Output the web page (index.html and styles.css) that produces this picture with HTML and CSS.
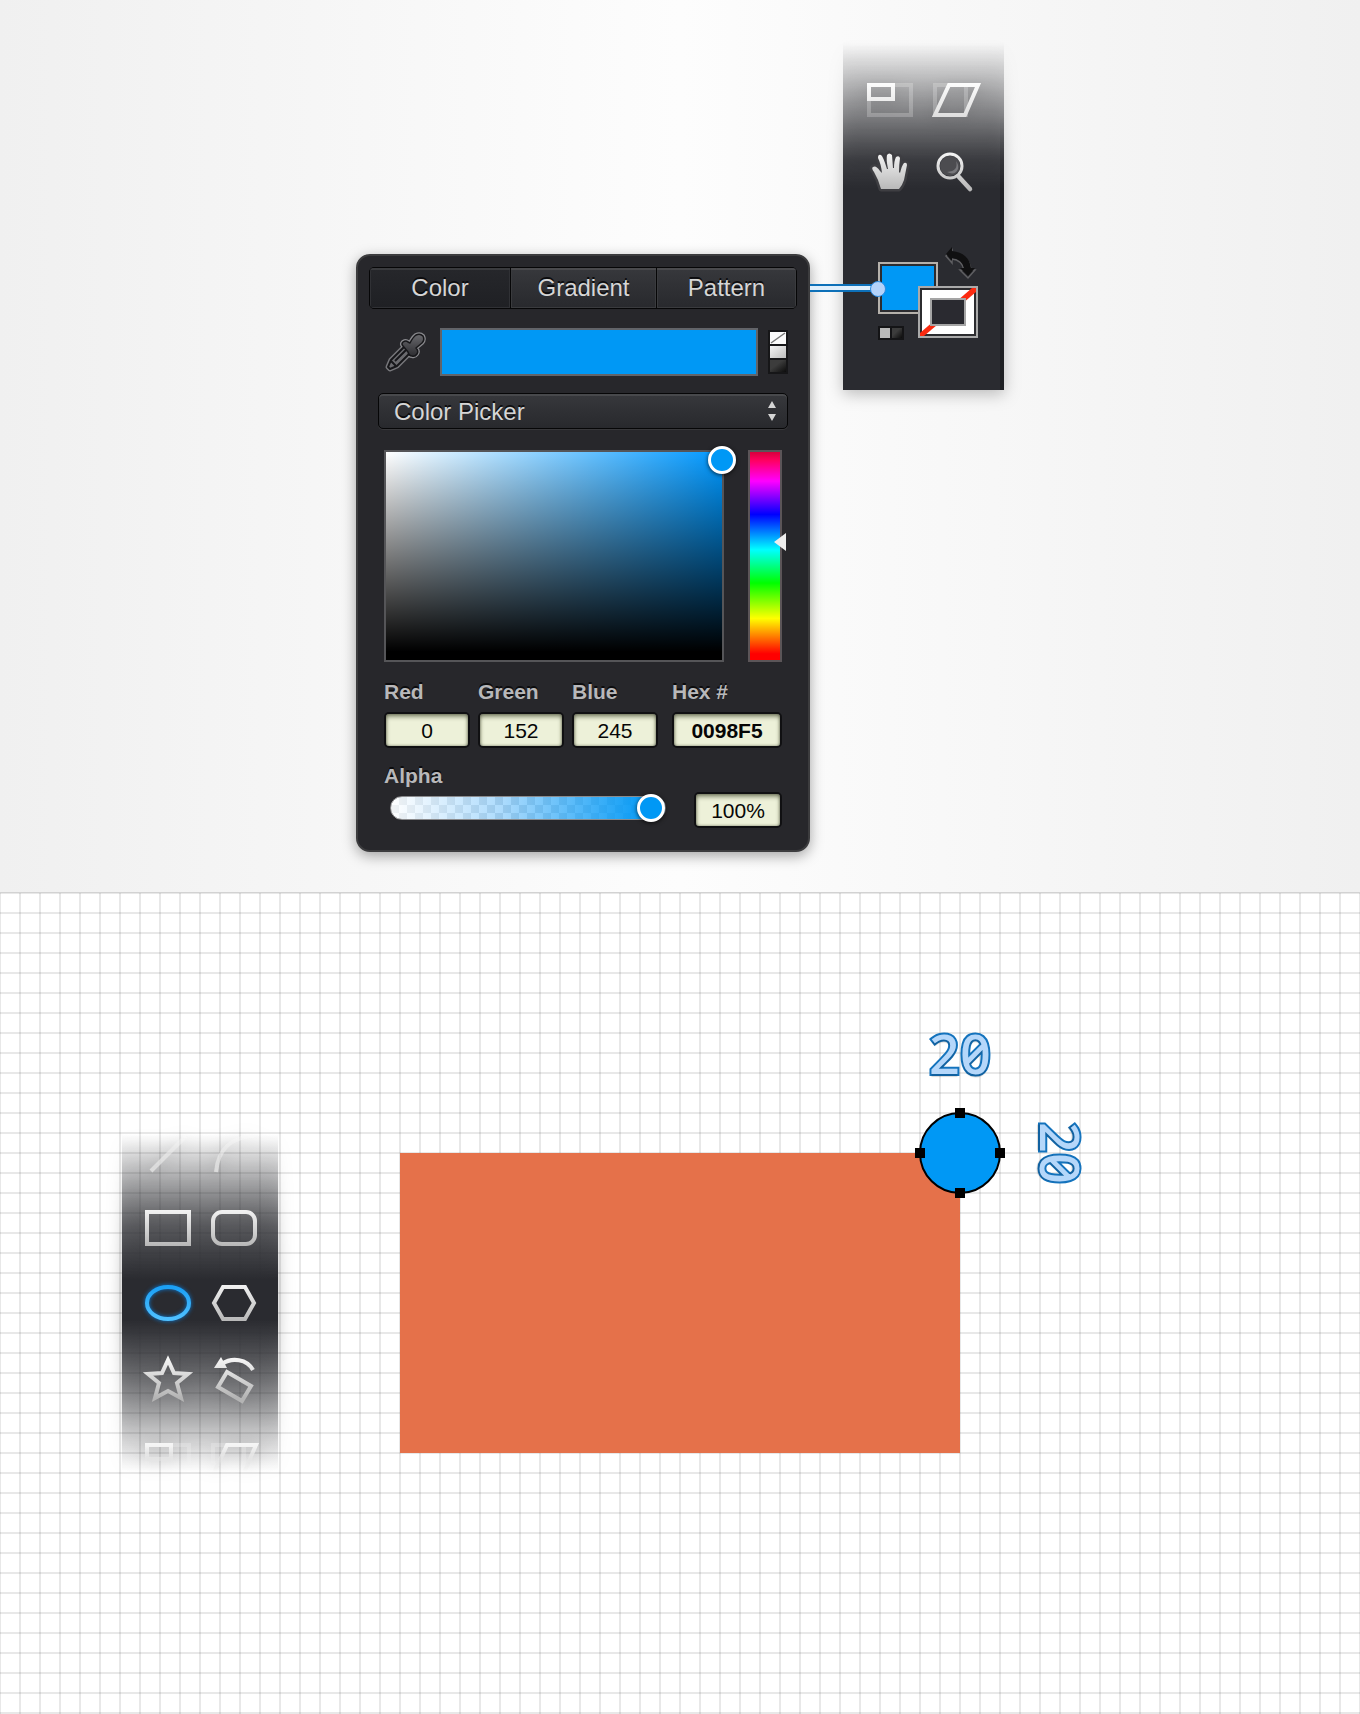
FILE: index.html
```html
<!DOCTYPE html>
<html lang="en">
<head>
<meta charset="utf-8">
<meta name="viewport" content="width=device-width, initial-scale=1">
<title>Color Picker</title>
<link rel="stylesheet" href="styles.css">
</head>
<body>
<svg class="defs" width="0" height="0" aria-hidden="true">
  <defs>
    <linearGradient id="metal" gradientUnits="userSpaceOnUse" x1="0" y1="-20" x2="0" y2="20">
      <stop offset="0" stop-color="#f6f6f6"/><stop offset="1" stop-color="#b4b4b4"/>
    </linearGradient>
    <linearGradient id="silver" gradientUnits="userSpaceOnUse" x1="0" y1="-20" x2="0" y2="20">
      <stop offset="0" stop-color="#ffffff"/><stop offset="1" stop-color="#dcdcdc"/>
    </linearGradient>
    <linearGradient id="glow" x1="0" y1="0" x2="0" y2="1">
      <stop offset="0" stop-color="#1ba0f5"/><stop offset="1" stop-color="#4fc0ff"/>
    </linearGradient>
    <linearGradient id="ink" x1="0" y1="0" x2="1" y2="1">
      <stop offset="0.4" stop-color="#3c3c3c"/><stop offset="1" stop-color="#0c0c0c"/>
    </linearGradient>
    <linearGradient id="paper" x1="0" y1="0" x2="1" y2="1">
      <stop offset="0" stop-color="#f4f4f4"/><stop offset="1" stop-color="#bdbdbd"/>
    </linearGradient>
    <linearGradient id="rubber" x1="0" y1="0" x2="0" y2="1">
      <stop offset="0" stop-color="#6a6a6e"/><stop offset="1" stop-color="#2c2c30"/>
    </linearGradient>
  </defs>
</svg>

<main class="page">
  <section class="picker-scene">
    <form class="panel">
      <div class="tabs">
        <button type="button" class="tab tab-active">Color</button>
        <button type="button" class="tab">Gradient</button>
        <button type="button" class="tab">Pattern</button>
      </div>
      <div class="panel-body">
        <div class="swatch-row">
          <button type="button" class="dropper" aria-label="Pick color from screen">
            <svg width="42" height="42" viewBox="0 0 42 42">
              <g stroke-linejoin="round">
                <path d="M4 36 L7 29 L23 13 L29 19 L13 35 L6 38 Z" fill="none" stroke="#77777b" stroke-width="5"/>
                <path d="M19 11 q3 -2 5 0 l2 1 q3 -6 6 -8 q4 -2 7 1 q2 4 -1 7 l-6 5 q3 3 1 6 q-2 3 -5 2 q-3 0 -4 -4 l-5 -6 q-2 -2 0 -4z" fill="#6d6d70" stroke="#8a8a8e" stroke-width="4"/>
                <path d="M4 36 L7 29 L23 13 L29 19 L13 35 L6 38 Z" fill="#6a6a6e" stroke="#17171a" stroke-width="2"/>
                <path d="M22 19 L11 30 M7 30 l5 5" stroke="#17171a" stroke-width="2"/>
                <path d="M19 11 q3 -2 5 0 l2 1 q3 -6 6 -8 q4 -2 7 1 q2 4 -1 7 l-6 5 q3 3 1 6 q-2 3 -5 2 q-3 0 -4 -4 l-5 -6 q-2 -2 0 -4z" fill="url(#rubber)" stroke="#17171a" stroke-width="1.5"/>
              </g>
            </svg>
          </button>
          <output class="current-color" aria-label="Current color"></output>
          <svg class="presets" width="20" height="44" viewBox="0 0 20 44">
            <rect width="20" height="44" fill="#161618"/>
            <rect x="2" y="2" width="16" height="12" fill="#fafafa"/>
            <path d="M3 13 L17 3" stroke="#777" stroke-width="1.5"/>
            <rect x="2" y="16" width="16" height="12" fill="url(#paper)"/>
            <rect x="2" y="30" width="16" height="12" fill="url(#ink)"/>
          </svg>
        </div>

        <div class="mode">
          <select class="mode-select" aria-label="Picker mode"><option>Color Picker</option></select>
          <svg class="mode-arrows" width="8" height="20" viewBox="0 0 8 20"><path d="M0 7 L4 0 L8 7Z M0 13 L4 20 L8 13Z" fill="#d5d5d5"/></svg>
        </div>

        <div class="spectrum">
          <div class="shade-field"><span class="shade-handle"></span></div>
          <div class="hue-strip"><input class="hue-range" type="range" min="0" max="360" value="154" aria-label="Hue"></div>
        </div>

        <div class="fields">
          <label class="field">Red<input class="value" type="text" value="0"></label>
          <label class="field">Green<input class="value" type="text" value="152"></label>
          <label class="field">Blue<input class="value" type="text" value="245"></label>
          <label class="field field-hex">Hex #<input class="value value-hex" type="text" value="0098F5"></label>
        </div>

        <div class="alpha">
          <label class="field alpha-field">Alpha<input class="alpha-range" type="range" min="0" max="100" value="100"></label>
          <input class="value alpha-value" type="text" value="100%" aria-label="Alpha percent">
        </div>
      </div>
      <span class="connector"></span>
    </form>

    <aside class="toolbar toolbar-fill">
      <div class="tools">
        <button type="button" class="tool" aria-label="Scale">
          <svg viewBox="-33 -36 66 72"><path d="M-21 -15 H21 V15 H-21Z" class="line faint"/><path d="M-21 -15 H3 V-1 H-21Z" class="line bright"/></svg>
        </button>
        <button type="button" class="tool" aria-label="Shear">
          <svg viewBox="-33 -36 66 72"><path d="M-21 -15 H10 V15 H-21Z" class="line faint"/><path d="M-7 -15 H22 L9 15 H-21Z" class="line bright"/></svg>
        </button>
        <button type="button" class="tool" aria-label="Hand">
          <svg viewBox="-33 -36 66 72">
            <path d="M-9 17 L-12 8 L-16 0 Q-19 -4 -17 -5 Q-14 -7 -10 -1 L-8 1 Q-9 -8 -12 -14 Q-12 -18 -9 -17 Q-7 -16 -3 -3 L-2 -3 Q-4 -13 -3 -17 Q-1 -20 2 -17 L3 -4 L4 -4 Q4 -11 6 -15 Q9 -17 10 -14 Q9 -7 9 0 L10 1 Q12 -7 14 -9 Q17 -10 17 -7 L14 8 Q12 14 9 17 Z" fill="none" stroke="#3e3e42" stroke-width="5" stroke-linejoin="round"/>
            <path d="M-9 17 L-12 8 L-16 0 Q-19 -4 -17 -5 Q-14 -7 -10 -1 L-8 1 Q-9 -8 -12 -14 Q-12 -18 -9 -17 Q-7 -16 -3 -3 L-2 -3 Q-4 -13 -3 -17 Q-1 -20 2 -17 L3 -4 L4 -4 Q4 -11 6 -15 Q9 -17 10 -14 Q9 -7 9 0 L10 1 Q12 -7 14 -9 Q17 -10 17 -7 L14 8 Q12 14 9 17 Z" fill="url(#metal)"/>
          </svg>
        </button>
        <button type="button" class="tool" aria-label="Zoom">
          <svg viewBox="-33 -36 66 72">
            <circle cx="-6" cy="-6" r="10" fill="#4c4c50"/>
            <path d="M0 -11 Q3 -1 -9 0 Q-1 4 2 -3 Q3 -7 0 -11Z" fill="#77777b"/>
            <circle cx="-6" cy="-6" r="12" class="line thin"/>
            <path d="M3 5 L14 17" fill="none" stroke="url(#metal)" stroke-width="4.5" stroke-linecap="round"/>
          </svg>
        </button>
      </div>
      <svg class="paint-wells" width="120" height="104" viewBox="0 0 120 104" role="img" aria-label="Fill and stroke">
        <g fill="none" stroke="#5f5f62" stroke-width="1.5">
          <path d="M76 15 L82 9 V12 Q99 14 101 29 H105 L98 37 L90 29 H94 Q92 19 82 18 V22Z" transform="translate(0 1)"/>
        </g>
        <path d="M76 14 L82 7 V11 Q99 13 101 28 H105 L98 36 L90 28 H94 Q92 19 82 18 V21Z" fill="#101011"/>
        <rect x="9" y="23" width="58" height="50" fill="#2c2c2f" stroke="#b5b1ab" stroke-width="2"/>
        <rect x="12" y="26" width="52" height="44" fill="#0098f5"/>
        <rect x="49" y="47" width="58" height="50" fill="#2c2c2f" stroke="#aaa" stroke-width="2"/>
        <rect x="52" y="50" width="52" height="44" fill="#fff"/>
        <path d="M50 93 V96 H54 L106 52 V48 H102Z" fill="#fb2a10"/>
        <rect x="61" y="59" width="34" height="26" fill="#2a2a30" stroke="#a5a5a5" stroke-width="2"/>
        <rect x="8" y="86" width="26" height="14" fill="#141416"/>
        <rect x="10" y="88" width="10" height="10" fill="#b9b9b9"/>
        <rect x="22" y="88" width="10" height="10" fill="url(#ink)"/>
      </svg>
    </aside>
  </section>

  <section class="canvas">
    <aside class="toolbar toolbar-shapes">
      <button type="button" class="tool fade-top" aria-label="Line"><svg viewBox="-33 -36 66 72"><path d="M-17 18 L18 -17" class="line bright"/></svg></button>
      <button type="button" class="tool fade-top" aria-label="Arc"><svg viewBox="-33 -36 66 72"><path d="M-18 19 C-16 -4 -2 -16 20 -17" class="line bright"/></svg></button>
      <button type="button" class="tool" aria-label="Rectangle"><svg viewBox="-33 -36 66 72"><path d="M-21 -16 H21 V16 H-21Z" class="line"/></svg></button>
      <button type="button" class="tool" aria-label="Rounded rectangle"><svg viewBox="-33 -36 66 72"><rect x="-21" y="-16" width="42" height="32" rx="9" class="line"/></svg></button>
      <button type="button" class="tool tool-active" aria-label="Ellipse"><svg viewBox="-33 -36 66 72"><ellipse rx="21" ry="16" class="line lit"/></svg></button>
      <button type="button" class="tool" aria-label="Polygon"><svg viewBox="-33 -36 66 72"><path d="M-11 -16 H11 L20 0 L11 16 H-11 L-20 0Z" class="line"/></svg></button>
      <button type="button" class="tool" aria-label="Star"><svg viewBox="-33 -36 66 72"><path d="M0 -18 L6 -5 L20 -4 L9 5 L13 20 L0 13 L-13 20 L-9 5 L-20 -4 L-6 -5Z" class="line"/></svg></button>
      <button type="button" class="tool" aria-label="Rotate"><svg viewBox="-33 -36 66 72"><path d="M-7 -6 L17 8 L8 23 L-16 9Z" class="line"/><path d="M-12 -14 C-2 -21 13 -19 19 -8" class="line"/><path d="M-20 -10 L-13 -21 L-7 -10Z" fill="url(#metal)"/></svg></button>
      <button type="button" class="tool fade-bottom" aria-label="Scale shape"><svg viewBox="-33 -36 66 72"><path d="M-21 -8 H21 V22 H-21Z" class="line faint"/><path d="M-21 -8 H3 V6 H-21Z" class="line bright"/></svg></button>
      <button type="button" class="tool fade-bottom" aria-label="Shear shape"><svg viewBox="-33 -36 66 72"><path d="M-21 -8 H10 V22 H-21Z" class="line faint"/><path d="M-7 -8 H22 L9 22 H-21Z" class="line bright"/></svg></button>
    </aside>
    <div class="artwork">
      <div class="ellipse">
        <i class="handle handle-n"></i><i class="handle handle-e"></i><i class="handle handle-s"></i><i class="handle handle-w"></i>
        <span class="measure measure-width">20</span>
        <span class="measure measure-height">20</span>
      </div>
    </div>
  </section>
</main>
</body>
</html>
```
FILE: styles.css
```css
* { box-sizing: border-box; }

body {
  margin: 0;
  font-family: "Liberation Sans", Arial, sans-serif;
  background: #fff;
}

button, input, select { font: inherit; color: inherit; margin: 0; }
.defs { position: absolute; }

.page {
  display: flex;
  flex-direction: column;
  min-height: 100vh;
}

/* Picker scene */
.picker-scene {
  display: flex;
  justify-content: center;
  align-items: flex-start;
  gap: 33px;
  padding: 42px 24px 40px;
  background: linear-gradient(90deg, #f0f0f0, #fdfdfd 50%, #f0f0f0);
}

.panel {
  position: relative;
  width: 454px;
  margin-top: 212px;
  padding: 11px;
  border: 2px solid #3c3c3e;
  border-radius: 14px;
  background: #27272b;
  box-shadow: 0 4px 14px rgba(0, 0, 0, .35);
}

.tabs {
  display: grid;
  grid-template-columns: 140px 145px 1fr;
  gap: 1px;
  height: 42px;
  border: 1px solid #060607;
  border-radius: 5px;
  overflow: hidden;
  background: #060607;
}

.tab {
  padding: 0;
  border: 0;
  box-shadow: inset 0 2px #4a4a4d, inset 0 0 0 1px #3a3b3e;
  background: linear-gradient(#37383c, #28292d);
  color: #d6d6d6;
  font-size: 24px;
  line-height: 36px;
  text-shadow: 0 -2px #0c0c0e;
}

.tab-active {
  box-shadow: inset 0 2px #3a3b3e, inset 0 0 0 1px #303135;
  background: linear-gradient(#26272b, #1f2024);
}

.panel-body { padding: 19px 9px 11px; }

.swatch-row {
  display: flex;
  align-items: center;
}

.dropper {
  display: flex;
  width: 62px;
  padding: 0 6px;
  border: 0;
  background: none;
}

.current-color {
  flex: 1;
  height: 48px;
  margin-right: 10px;
  border: 2px solid #626469;
  background: #0098f5;
}

.mode {
  position: relative;
  margin-top: 17px;
}

.mode-select {
  appearance: none;
  display: block;
  width: 100%;
  height: 36px;
  padding: 2px 15px 0;
  border: 1px solid #060607;
  border-radius: 5px;
  background: linear-gradient(#37383c, #28292d);
  box-shadow: inset 0 2px #48494c, 0 1px #38383b;
  color: #d6d6d6;
  font-size: 24px;
  line-height: 32px;
  text-shadow: 0 -2px #0c0c0e;
}

.mode-arrows {
  position: absolute;
  top: 8px;
  right: 12px;
  pointer-events: none;
}

.spectrum {
  display: flex;
  justify-content: space-between;
  margin-top: 21px;
  padding: 0 6px;
}

.shade-field {
  position: relative;
  width: 340px;
  height: 212px;
  border: 2px solid #555558;
  background:
    linear-gradient(transparent, #000 96%) padding-box,
    linear-gradient(90deg, #fff, #0098ff) padding-box;
}

.shade-handle {
  position: absolute;
  top: -6px;
  right: -14px;
  width: 28px;
  height: 28px;
  border: 3px solid #fff;
  border-radius: 50%;
  background: #0098f5;
  box-shadow: 0 1px 4px rgba(0, 0, 0, .7);
}

.hue-strip {
  position: relative;
  width: 34px;
  height: 212px;
  border: 2px solid #5b5558;
  background: linear-gradient(#d8003c, #ff0060 4%, #f0f 14%, #00f 30%, #0ff 47%, #0f0 63%, #ff0 80%, #f00 97%) padding-box;
}

.hue-range {
  appearance: none;
  writing-mode: vertical-lr;
  position: absolute;
  top: -2px;
  right: -6px;
  width: 12px;
  height: 212px;
  margin: 0;
  background: none;
}

.hue-range::-webkit-slider-thumb {
  appearance: none;
  width: 12px;
  height: 18px;
  background: #eee;
  clip-path: polygon(0 50%, 100% 0, 100% 100%);
}

.fields {
  display: flex;
  gap: 8px;
  margin-top: 18px;
  padding: 0 6px;
}

.field {
  display: flex;
  flex-direction: column;
  gap: 8px;
  width: 86px;
  color: #b8b8ba;
  font-size: 21px;
  font-weight: 700;
  line-height: 24px;
  text-shadow: 0 -2px #0c0c0e;
}

.field-hex { flex: 1; margin-left: 6px; }

.value {
  width: 100%;
  height: 36px;
  padding: 2px 0 0;
  border: 2px solid #101012;
  border-radius: 5px;
  background: #edf1d9;
  box-shadow: inset 0 3px 4px rgba(50, 55, 30, .5), inset 0 0 3px rgba(50, 55, 30, .6);
  color: #060606;
  font-size: 21px;
  font-weight: 400;
  text-align: center;
}

.value-hex { font-weight: 700; }

.alpha {
  display: flex;
  justify-content: space-between;
  align-items: flex-end;
  margin-top: 16px;
  padding: 0 6px;
}

.alpha-field {
  align-self: flex-start;
  gap: 6px;
  width: 282px;
}

.alpha-value { width: 88px; margin-top: 28px; }

.alpha-range {
  appearance: none;
  height: 28px;
  margin-left: 6px;
  background: none;
}

.alpha-range::-webkit-slider-runnable-track {
  height: 24px;
  border: 1px solid #8a8a8c;
  border-radius: 12px;
  background:
    linear-gradient(90deg, rgba(255, 255, 255, .8), rgba(140, 205, 252, .7) 40%, #0098f5 95%),
    repeating-conic-gradient(#b9c1c8 0 25%, #fff 0 50%) 0 0 / 16px 16px;
}

.alpha-range::-webkit-slider-thumb {
  appearance: none;
  width: 28px;
  height: 28px;
  margin-top: -3px;
  border: 3px solid #fff;
  border-radius: 50%;
  background: #0098f5;
  box-shadow: 0 1px 4px rgba(0, 0, 0, .7);
}

/* Callout line from the panel to the fill well */
.connector {
  position: absolute;
  z-index: 1;
  top: 28px;
  left: 452px;
  width: 69px;
  height: 8px;
  border: solid #0d70b8;
  border-width: 2px 0;
  background: #e0effc;
}

.connector::after {
  content: "";
  position: absolute;
  top: -5px;
  right: -7px;
  width: 14px;
  height: 14px;
  border: 1px solid #2b8ae0;
  border-radius: 50%;
  background: #b3d2fa;
}

/* Toolbars */
.toolbar-fill {
  width: 161px;
  padding: 22px 14px 46px;
  background:
    linear-gradient(transparent 20%, rgba(0, 0, 0, .25) 45%) right / 4px 100% no-repeat,
    linear-gradient(rgba(42, 43, 48, 0), rgba(42, 43, 48, .24) 10%, rgba(42, 43, 48, .55) 22%, rgba(42, 43, 48, .9) 34%, #2a2b30 42%);
  filter: drop-shadow(0 4px 8px rgba(0, 0, 0, .25));
}

.tools {
  display: grid;
  grid-template-columns: 66px 66px;
  grid-auto-rows: 72px;
}

.tool {
  display: flex;
  align-items: center;
  padding: 0;
  border: 0;
  background: none;
}

.tool svg { width: 66px; height: 72px; }

.line {
  fill: none;
  stroke: url(#metal);
  stroke-width: 4px;
}

.bright { stroke: url(#silver); }
.faint { stroke: rgba(255, 255, 255, .22); }
.thin { stroke-width: 3px; }
.lit { stroke: url(#glow); }
.tool-active svg { filter: drop-shadow(0 0 2px rgba(0, 140, 255, .8)); }

.paint-wells { display: block; margin: 32px 0 0 13px; }

.canvas {
  flex: 1;
  display: grid;
  grid-template-columns: 1fr 560px 1fr;
  align-items: center;
  padding: 241px 0 242px;
  border-top: 1px solid #d2d2d2;
  background:
    linear-gradient(rgba(0, 0, 0, .09) 2px, transparent 2px) center top -1px / 20px 20px,
    linear-gradient(90deg, transparent 9px, rgba(0, 0, 0, .09) 9px, rgba(0, 0, 0, .09) 11px, transparent 11px) center top / 20px 20px,
    #fff;
}

.toolbar-shapes {
  display: grid;
  grid-template-columns: 66px 66px;
  grid-auto-rows: 75px;
  place-content: center;
  justify-self: center;
  width: 156px;
  height: 338px;
  padding-left: 2px;
  overflow: hidden;
  background: linear-gradient(rgba(42, 43, 48, 0), rgba(42, 43, 48, .3) 12%, rgba(42, 43, 48, .72) 27%, #2a2b30 43%, #2a2b30 55%, rgba(42, 43, 48, .6) 73%, rgba(42, 43, 48, .25) 87%, rgba(42, 43, 48, 0));
  filter: drop-shadow(0 2px 8px rgba(0, 0, 0, .25));
}

.fade-top { mask-image: linear-gradient(rgba(0, 0, 0, .2) 20%, #000 80%); }
.fade-bottom { mask-image: linear-gradient(#000 40%, transparent 75%); }

.artwork {
  position: relative;
  height: 300px;
  background: #e5714a;
}

.ellipse {
  position: absolute;
  top: -41px;
  right: -41px;
  width: 82px;
  height: 82px;
  border: 2px solid #000;
  border-radius: 50%;
  background: #0098f5;
}

.handle {
  position: absolute;
  width: 10px;
  height: 10px;
  background: #000;
}

.handle-n { top: -6px; left: 34px; }
.handle-e { top: 34px; right: -6px; }
.handle-s { bottom: -6px; left: 34px; }
.handle-w { top: 34px; left: -6px; }

.measure {
  position: absolute;
  color: #b5d7fa;
  font-family: "Noto Sans", sans-serif;
  font-size: 54px;
  font-weight: 500;
  font-feature-settings: "zero";
  line-height: 60px;
  text-align: center;
  -webkit-text-stroke: 4px #1473bd;
  paint-order: stroke fill;
  text-shadow: 0 3px 1px rgba(0, 0, 0, .15);
}

.measure-width {
  left: 0;
  width: 78px;
  bottom: 109px;
}

.measure-height {
  top: 0;
  left: 110px;
  height: 78px;
  writing-mode: vertical-rl;
}
```
